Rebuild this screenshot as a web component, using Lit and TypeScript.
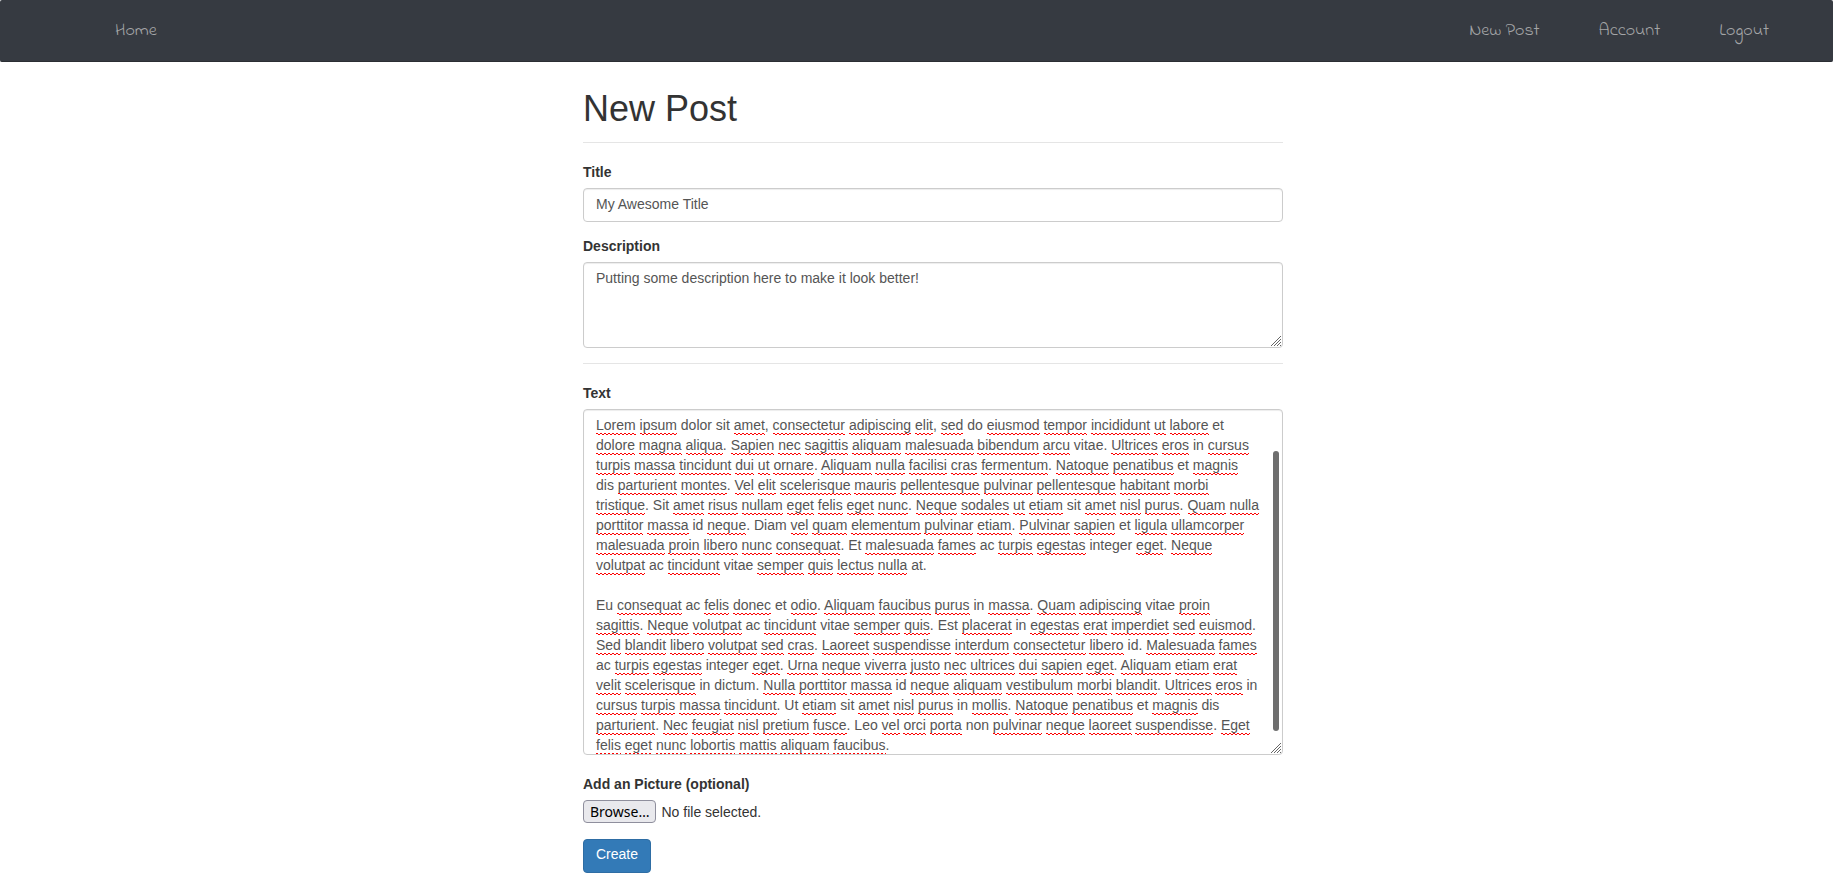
import { LitElement, html, css } from "lit";
import { customElement, state } from "lit/decorators.js";

const BODY_TEXT =
  "Lorem ipsum dolor sit amet, consectetur adipiscing elit, sed do eiusmod tempor incididunt ut labore et dolore magna aliqua. Sapien nec sagittis aliquam malesuada bibendum arcu vitae. Ultrices eros in cursus turpis massa tincidunt dui ut ornare. Aliquam nulla facilisi cras fermentum. Natoque penatibus et magnis dis\u00a0parturient montes. Vel elit scelerisque mauris pellentesque pulvinar pellentesque habitant morbi tristique. Sit amet risus nullam eget felis eget nunc. Neque sodales ut etiam sit amet nisl purus. Quam nulla porttitor massa id neque. Diam vel quam elementum pulvinar etiam. Pulvinar sapien et ligula ullamcorper malesuada proin libero nunc consequat. Et malesuada fames ac turpis egestas integer eget. Neque volutpat ac tincidunt vitae semper quis lectus nulla at.\n\nEu consequat ac felis donec et odio. Aliquam faucibus purus in massa. Quam adipiscing vitae proin sagittis. Neque volutpat ac tincidunt vitae semper quis. Est placerat in egestas erat imperdiet sed euismod. Sed blandit libero volutpat sed cras. Laoreet suspendisse interdum consectetur libero id. Malesuada fames ac turpis egestas integer eget. Urna neque viverra justo nec ultrices dui sapien eget. Aliquam etiam erat velit scelerisque in dictum. Nulla porttitor massa id neque aliquam vestibulum morbi blandit. Ultrices eros in cursus turpis massa tincidunt. Ut etiam sit amet nisl purus in mollis. Natoque penatibus et magnis dis parturient. Nec feugiat nisl pretium fusce. Leo vel orci porta non pulvinar neque laoreet suspendisse. Eget felis eget nunc lobortis mattis aliquam faucibus.";

/** Words the dictionary accepts; everything else gets a squiggle. */
const KNOWN = new Set(
  "dolor sit do et vitae in dis id ac integer at dictum non Ut Sit Et Eu Est Diam Leo".split(" "),
);

@customElement("app-root")
export class AppRoot extends LitElement {
  static styles = css`
    :host {
      display: block;
      font: 14px/20px "Liberation Sans", Arial, sans-serif;
      color: #333;
    }
    *,
    *::before,
    *::after {
      box-sizing: border-box;
    }
    .navbar {
      display: flex;
      justify-content: space-between;
      align-items: center;
      min-height: 62px;
      padding: 0 64px 0 115px;
      background: #363a41;
      border-bottom: 1px solid #2b2e33;
      border-radius: 2px;
      font: 400 18px/20px "Indie Flower", cursive;
    }
    .navbar a {
      color: #a4a5a7;
      text-decoration: none;
    }
    .links {
      display: flex;
      gap: 59px;
    }
    .page {
      padding-left: 33px;
    }
    .content {
      max-width: 700px;
      margin: 0 auto;
    }
    h1 {
      margin: 27px 0 0;
      padding-bottom: 13px;
      border-bottom: 1px solid #e5e5e5;
      font-size: 36px;
      line-height: 40px;
      font-weight: 400;
    }
    .form {
      display: flex;
      flex-direction: column;
      padding-top: 19px;
    }
    .group {
      display: grid;
      margin-bottom: 14px;
    }
    .group.body {
      margin-bottom: 19px;
    }
    .group.picture {
      margin-bottom: 16px;
    }
    label {
      justify-self: start;
      margin-bottom: 6px;
      font-weight: 700;
    }
    .control {
      display: block;
      width: 100%;
      margin: 0;
      padding: 5px 12px;
      border: 1px solid #ccc;
      border-radius: 4px;
      background: #fff;
      box-shadow: inset 0 1px 1px rgba(0, 0, 0, 0.075);
      color: #555;
      font: inherit;
      outline: none;
    }
    input.control {
      height: 34px;
      padding-bottom: 7px;
    }
    .description {
      height: 86px;
      resize: vertical;
    }
    .description::-webkit-resizer,
    .text::-webkit-resizer {
      background: url("data:image/svg+xml,%3Csvg xmlns='http://www.w3.org/2000/svg' width='12' height='12'%3E%3Cpath d='M1 11L11 1M4 11L11 4M7 11L11 7M10 11L11 10' stroke='%23666' fill='none'/%3E%3C/svg%3E")
        right bottom no-repeat;
    }
    hr {
      width: 100%;
      margin: 1px 0 19px;
      border: 0;
      border-top: 1px solid #e5e5e5;
    }
    .editor {
      display: grid;
      position: relative;
      background: #fff;
      border-radius: 4px;
    }
    .editor > .control {
      grid-area: 1 / 1;
      padding-right: 22px;
      background: transparent;
    }
    .text {
      height: 346px;
      overflow: hidden;
      resize: vertical;
    }
    .editor > .marks {
      height: 0;
      min-height: 100%;
      overflow: hidden;
      border-color: transparent;
      box-shadow: none;
      color: transparent;
      white-space: pre-wrap;
      overflow-wrap: break-word;
      pointer-events: none;
      user-select: none;
    }
    .typo {
      padding-bottom: 2px;
      background: url("data:image/svg+xml,%3Csvg xmlns='http://www.w3.org/2000/svg' width='4' height='2'%3E%3Cpath d='M0 0h2v1H0zM2 1h2v1H2z' fill='red'/%3E%3C/svg%3E")
        left bottom repeat-x;
    }
    .thumb {
      position: absolute;
      top: 42px;
      right: 4px;
      bottom: 24px;
      width: 6px;
      border-radius: 3px;
      background: #6e6e6e;
    }
    .file-row {
      display: flex;
      align-items: center;
      gap: 5px;
    }
    .browse {
      height: 23px;
      padding: 0 6px;
      border: 1px solid #8f8f9d;
      border-radius: 4px;
      background: #e9e9ed;
      color: #000;
      font: 14px/20px "Noto Sans", sans-serif;
    }
    .create {
      align-self: flex-start;
      height: 34px;
      padding: 4px 12px 8px;
      border: 1px solid #2e6da4;
      border-radius: 4px;
      background: #337ab7;
      color: #fff;
      font: inherit;
      cursor: pointer;
    }
  `;

  @state() private text = BODY_TEXT;
  @state() private fileName = "";

  private onInput(e: Event) {
    this.text = (e.target as HTMLTextAreaElement).value;
  }

  private onPick(e: Event) {
    this.fileName = (e.target as HTMLInputElement).files?.[0]?.name ?? "";
  }

  private openPicker() {
    this.renderRoot.querySelector<HTMLInputElement>("#picture")?.click();
  }

  private marked() {
    return this.text
      .split(/([A-Za-z]+)/)
      .map((part, i) => (i % 2 && !KNOWN.has(part) ? html`<span class="typo">${part}</span>` : part));
  }

  render() {
    return html`
      <nav class="navbar">
        <a href="#home">Home</a>
        <div class="links">
          <a href="#new">New Post</a>
          <a href="#account">Account</a>
          <a href="#logout">Logout</a>
        </div>
      </nav>
      <main class="page">
        <div class="content">
          <h1>New Post</h1>
          <form class="form" @submit=${(e: Event) => e.preventDefault()}>
            <div class="group">
              <label for="title">Title</label>
              <input class="control" id="title" type="text" value="My Awesome Title" />
            </div>
            <div class="group">
              <label for="description">Description</label>
              <textarea class="control description" id="description" spellcheck="false" .value=${"Putting some description here to make it look better!"}></textarea>
            </div>
            <hr />
            <div class="group body">
              <label for="text">Text</label>
              <div class="editor">
                <div class="control marks" aria-hidden="true">${this.marked()}</div>
                <textarea class="control text" id="text" spellcheck="false" .value=${this.text} @input=${this.onInput}></textarea>
                <span class="thumb"></span>
              </div>
            </div>
            <div class="group picture">
              <label for="picture">Add an Picture (optional)</label>
              <div class="file-row">
                <input id="picture" type="file" hidden @change=${this.onPick} />
                <button class="browse" type="button" @click=${this.openPicker}>Browse…</button>
                <span>${this.fileName || "No file selected."}</span>
              </div>
            </div>
            <button class="create" type="submit">Create</button>
          </form>
        </div>
      </main>
    `;
  }
}
